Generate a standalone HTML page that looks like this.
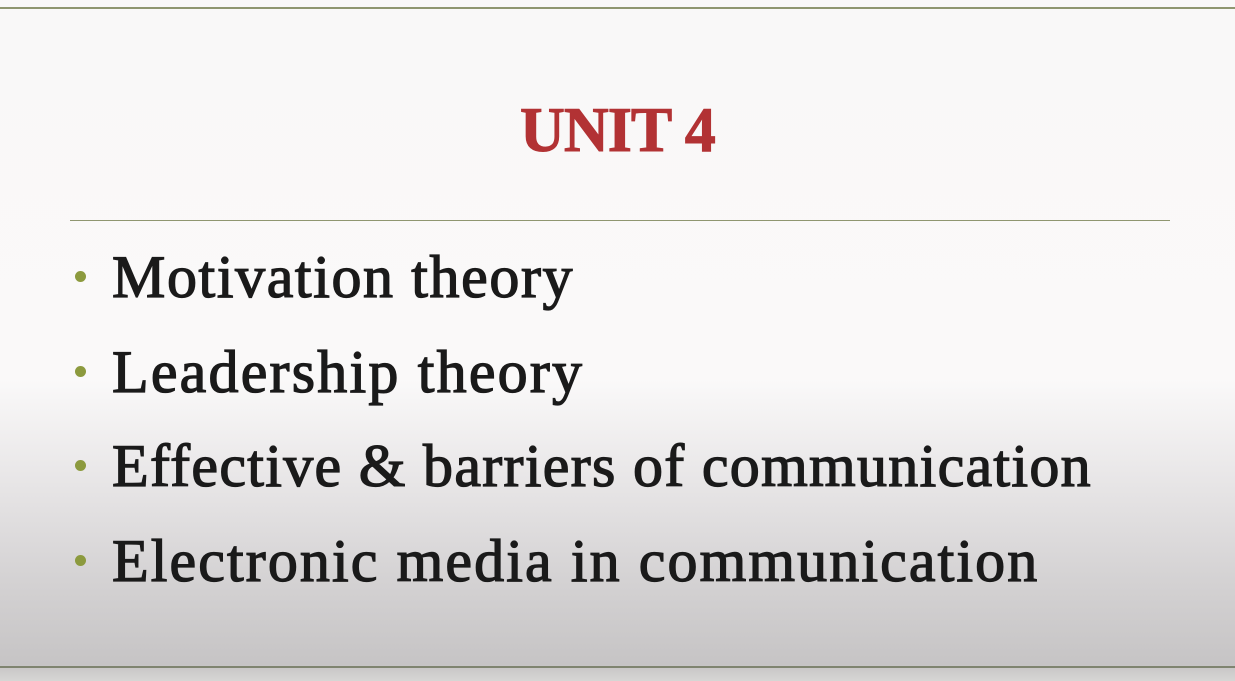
<!DOCTYPE html>
<html><head><style>
html,body{margin:0;padding:0}
body{width:1235px;height:681px;position:relative;overflow:hidden;
background:linear-gradient(to bottom,#f9f8f8 0px,#faf9f9 380px,#e8e6e7 480px,#d4d2d3 580px,#c6c4c5 665px,#d6d6d4 681px);
font-family:"Liberation Serif",serif}
.line{position:absolute;background:#8f9670}
.title{position:absolute;left:520px;top:95px;font-size:64px;font-weight:bold;color:#b23234;letter-spacing:-1px;line-height:70px;white-space:nowrap;transform:scaleX(0.97);transform-origin:left;-webkit-text-stroke:1px #b23234}
.b{position:absolute;left:112px;font-size:60px;color:#1a1a1a;white-space:nowrap;line-height:70px;letter-spacing:1.6px;-webkit-text-stroke:1.3px #1a1a1a}
.d{position:absolute;left:75px;width:11px;height:11px;border-radius:50%;background:#8c9a3e}
</style></head><body>
<div class="line" style="left:0;top:7px;width:1235px;height:2px"></div>
<div class="title">UNIT 4</div>
<div class="line" style="left:70px;top:220px;width:1100px;height:1px"></div>
<div class="d" style="top:271px"></div>
<div class="b" style="top:242px">Motivation theory</div>
<div class="d" style="top:366px"></div>
<div class="b" style="top:337px;letter-spacing:2.2px">Leadership theory</div>
<div class="d" style="top:460px"></div>
<div class="b" style="top:431px;letter-spacing:1.3px">Effective &amp; barriers of communication</div>
<div class="d" style="top:555px"></div>
<div class="b" style="top:526px;letter-spacing:2.1px">Electronic media in communication</div>
<div class="line" style="left:0;top:666px;width:1235px;height:2px;background:#7f8470"></div>
</body></html>
